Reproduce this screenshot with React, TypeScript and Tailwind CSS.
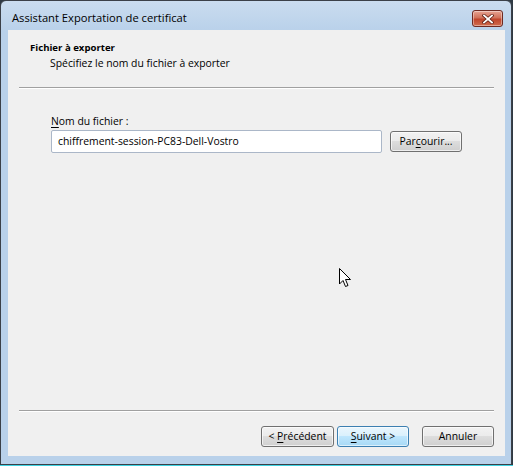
import React from 'react';

const font = { fontFamily: '"Open Sans", "Noto Sans", sans-serif' };

const Button: React.FC<{ label: React.ReactNode; primary?: boolean; className?: string }> = ({ label, primary, className }) => (
  <div
    className={
      'h-[21px] rounded-[3px] border flex items-center justify-center text-[10.4px] text-black ' +
      (primary
        ? 'border-[#3c7fb1] bg-[linear-gradient(#eaf6fd_0%,#d9f0fc_49%,#bee6fd_50%,#a7d9f5_100%)] shadow-[inset_0_0_0_1px_#ffffff99] '
        : 'border-[#707070] bg-[linear-gradient(#f2f2f2_0%,#ebebeb_49%,#dddddd_50%,#cfcfcf_100%)] shadow-[inset_0_0_0_1px_#ffffffaa] ') +
      (className ?? '')
    }
  >
    {label}
  </div>
);

const Cursor = () => (
  <svg width="13" height="20" viewBox="0 0 13 20" className="absolute left-[339px] top-[268px]">
    <path d="M0.5 0.5 L0.5 16 L4 12.5 L6.5 18.5 L9 17.5 L6.5 11.5 L11.5 11.5 Z" fill="#fff" stroke="#000" strokeWidth="1" />
  </svg>
);

export default function App() {
  return (
    <div className="w-[513px] h-[466px] bg-[#2f3a44] relative" style={font}>
      <div className="w-[512px] h-[465px] rounded-t-[6px] border border-[#3b4048] bg-[linear-gradient(#cadcef,#b9d1ea_30px)] flex flex-col">
        <div className="h-[29px] flex justify-between pl-[11px] pr-[8px]">
          <span className="text-[11.2px] text-black pt-[9px] leading-[16px]">Assistant Exportation de certificat</span>
          <div className="w-[31px] h-[17px] mt-[9px] rounded-[3px] border border-[#6e2a22] bg-[linear-gradient(#e8a493,#d0715a_45%,#c0452c_55%,#d06c4e)] shadow-[inset_0_0_0_1px_#ffffff66] flex items-center justify-center">
            <svg width="12" height="10" viewBox="0 0 12 10">
              <path d="M2 1.5 L10 8.5 M10 1.5 L2 8.5" stroke="#5a1a10" strokeWidth="3.2" strokeLinecap="square" />
              <path d="M2 1.5 L10 8.5 M10 1.5 L2 8.5" stroke="#ffffff" strokeWidth="1.8" strokeLinecap="square" />
            </svg>
          </div>
        </div>
        <div className="ml-[7px] w-[497px] h-[426px] bg-[#f0f0f0] flex flex-col text-[10.4px] text-black">
          <div className="pl-[22px] pt-[10px] font-bold text-[9.6px] leading-[15px]">Fichier à exporter</div>
          <div className="pl-[42px] leading-[16px]">Spécifiez le nom du fichier à exporter</div>
          <div className="ml-[11px] mt-[16px] w-[475px] border-t border-[#a0a0a0] border-b border-b-white" />
          <div className="pl-[43px] mt-[24px] leading-[16px]">
            <span className="underline underline-offset-2">N</span>om du fichier :
          </div>
          <div className="flex items-center ml-[43px] mt-[1px] gap-[8px]">
            <div className="w-[331px] h-[23px] border border-[#abb7c8] rounded-[2px] bg-white flex items-center pl-[6px]">
              chiffrement-session-PC83-Dell-Vostro
            </div>
            <Button className="w-[72px]" label={<span>Par<span className="underline underline-offset-2">c</span>ourir...</span>} />
          </div>
          <div className="flex-1" />
          <div className="ml-[11px] w-[475px] border-t border-[#a0a0a0] border-b border-b-white" />
          <div className="flex justify-end mt-[14px] mb-[9px] pr-[11px]">
            <Button className="w-[73px]" label={<span>&lt; <span className="underline underline-offset-2">P</span>récédent</span>} />
            <Button primary className="w-[72px] ml-[3px]" label={<span><span className="underline underline-offset-2">S</span>uivant &gt;</span>} />
            <Button className="w-[72px] ml-[13px]" label="Annuler" />
          </div>
        </div>
      </div>
      <div className="absolute left-0 bottom-0 w-[513px] h-[1px] bg-[#3fd2e2]" />
      <Cursor />
    </div>
  );
}
